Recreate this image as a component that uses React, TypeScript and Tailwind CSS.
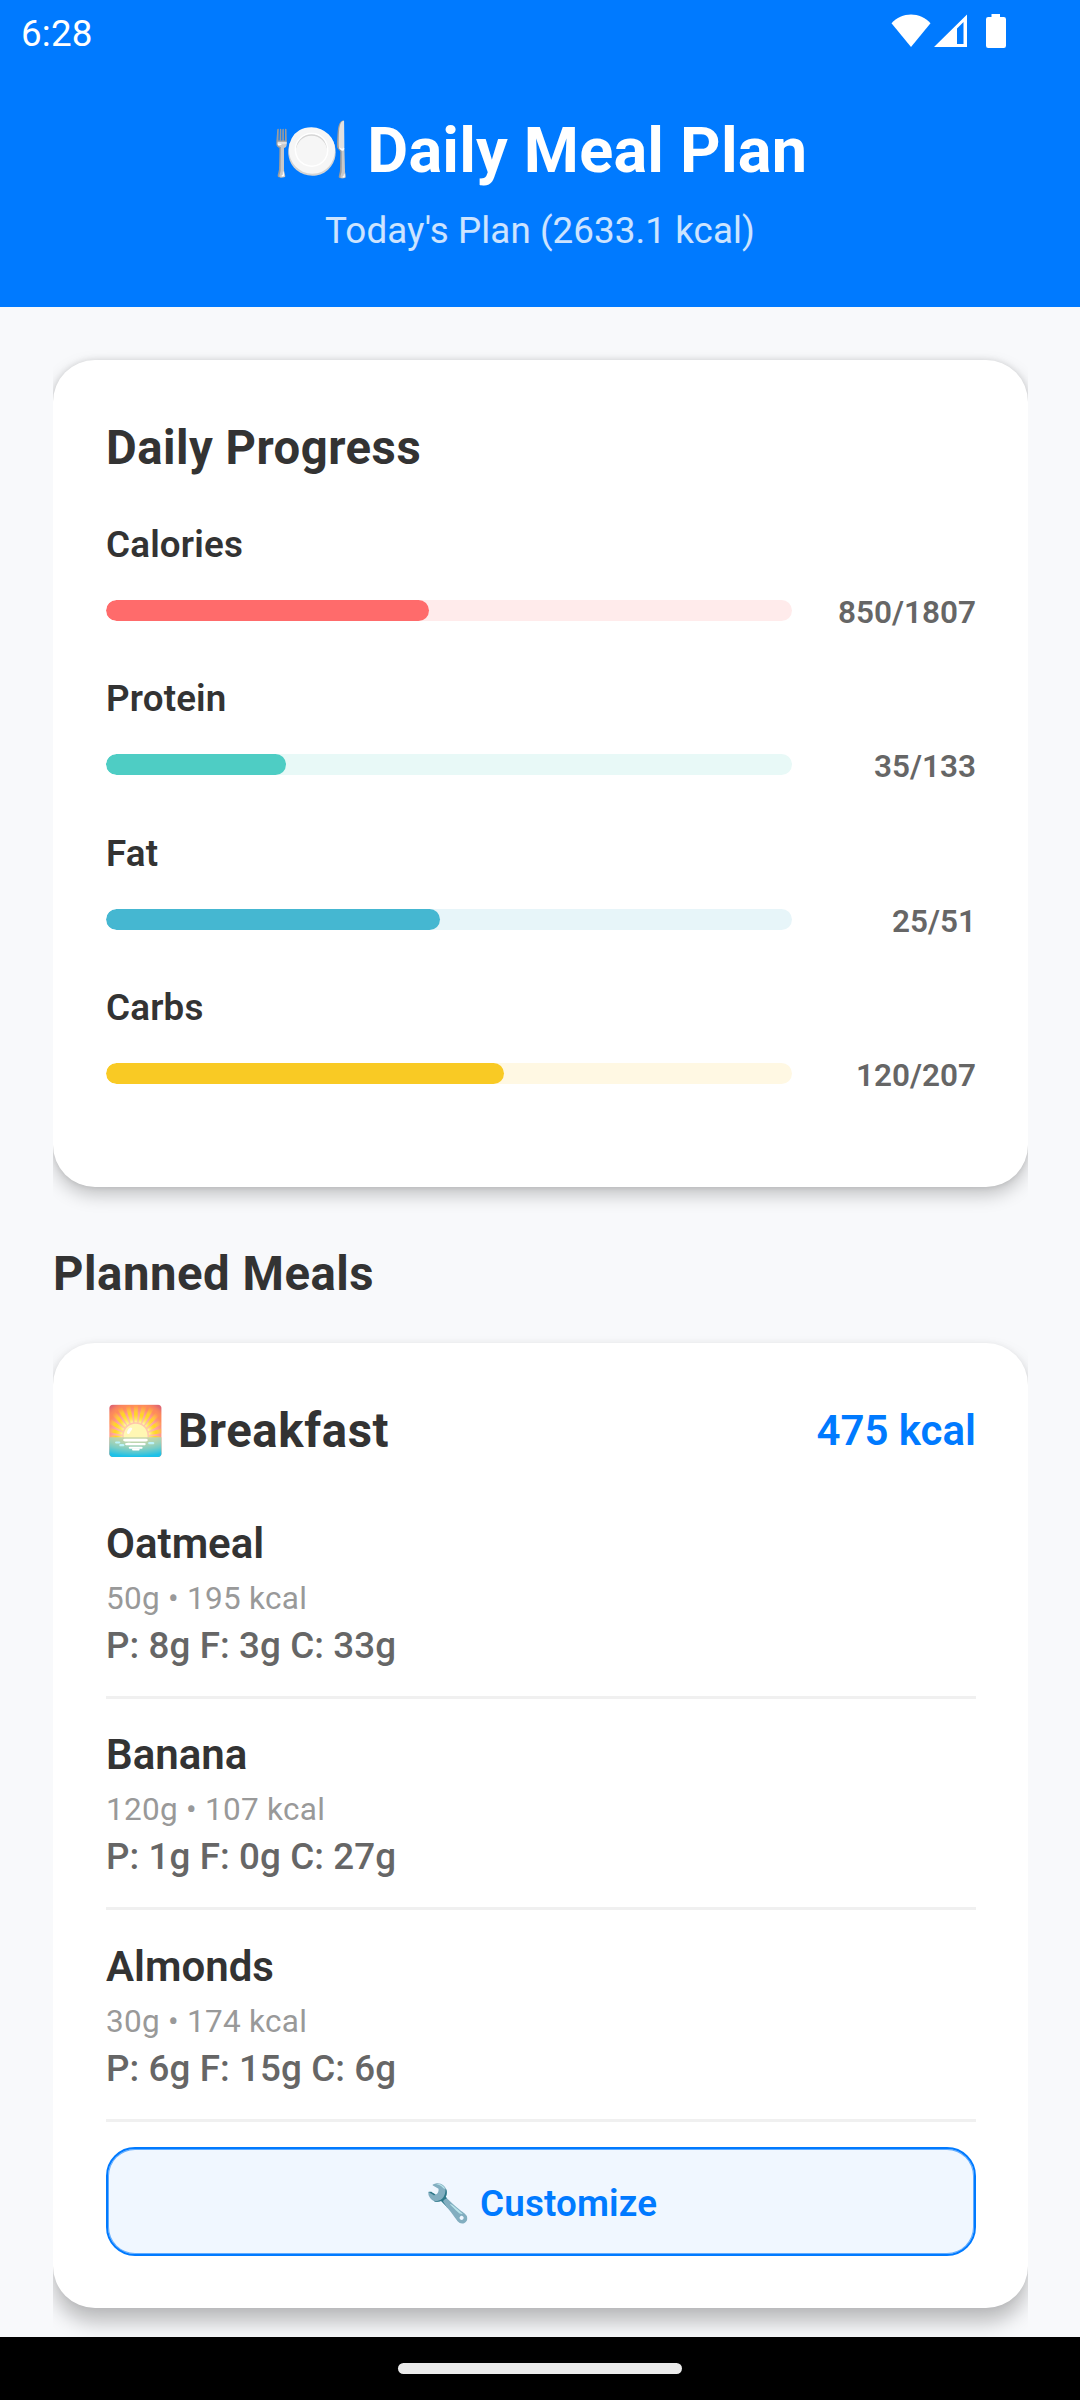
const nutrients = [
  { name: 'Calories', value: 850, goal: 1807, fill: 'bg-[#ff6b6b]', track: 'bg-[#ffebeb]' },
  { name: 'Protein', value: 35, goal: 133.4, fill: 'bg-[#4ecdc4]', track: 'bg-[#e8f9f7]' },
  { name: 'Fat', value: 25, goal: 51.35, fill: 'bg-[#45b7d1]', track: 'bg-[#e7f5f9]' },
  { name: 'Carbs', value: 120, goal: 207, fill: 'bg-[#f9ca24]', track: 'bg-[#fff8e3]' },
];

const foods = [
  { name: 'Oatmeal', detail: '50g • 195 kcal', macros: 'P: 8g F: 3g C: 33g' },
  { name: 'Banana', detail: '120g • 107 kcal', macros: 'P: 1g F: 0g C: 27g' },
  { name: 'Almonds', detail: '30g • 174 kcal', macros: 'P: 6g F: 15g C: 6g' },
];

function StatusBar() {
  return (
    <div className="flex h-[67px] items-start justify-between pl-[21px] pr-[74px] text-white">
      <span className="text-[36.75px] leading-[67px] tracking-[0.2px]">6:28</span>
      <svg width="116" height="36" viewBox="0 0 116 36" className="mt-[13px]" fill="#fff">
        <path d="M1.500 10.200C11.500 -1.500 30.500 -1.500 40.500 10.200L21 34Z" />
        <path fillRule="evenodd" d="M44 34L77 1.500V34ZM67 31H73.500V9L67 15.500Z" />
        <path d="M101.500 1h8.500v3h3.800a2.200 2.200 0 0 1 2.200 2.200v26.600a2.200 2.200 0 0 1-2.200 2.200h-15.600a2.200 2.200 0 0 1-2.200-2.200V6.200A2.200 2.200 0 0 1 98.200 4h3.300z" />
      </svg>
    </div>
  );
}

export default function App() {
  return (
    <div className="flex h-[2400px] w-[1080px] flex-col overflow-hidden bg-[#f8f9fb] font-['Roboto','Noto_Color_Emoji',sans-serif] text-[#333]">
      <header className="h-[307px] shrink-0 bg-[#007aff] text-center text-white">
        <StatusBar />
        <h1 className="mt-[46px] h-[75px] whitespace-nowrap text-[63px] font-bold leading-[75px] tracking-[0.2px]">🍽️ Daily Meal Plan</h1>
        <p className="mt-[21px] text-[36.75px] leading-[43px] tracking-[0.08px] text-white/80">Today's Plan (2633.1 kcal)</p>
      </header>

      <main className="mx-[53px] h-[2030px] w-[975px] shrink-0 overflow-clip pt-[53px]">
        <section className="h-[827px] rounded-[42px] bg-white pl-[53px] pr-[52px] pt-[60px] shadow-[0_8px_18px_rgba(0,0,0,0.22),0_0_6px_rgba(0,0,0,0.12)]">
          <h2 className="text-[47.25px] font-bold leading-[56px] tracking-[0.5px]">Daily Progress</h2>
          <div className="mt-[47px] flex flex-col gap-[45.33px]">
            {nutrients.map((n) => (
              <div key={n.name}>
                <div className="text-[36.75px] font-semibold leading-[44px] tracking-[0.18px]">{n.name}</div>
                <div className="mt-[27px] flex h-[38px] items-start justify-between">
                  <div className={`mt-[6px] h-[21px] w-[686px] overflow-hidden rounded-full ${n.track}`}>
                    <div className={`h-full rounded-full ${n.fill}`} style={{ width: `${(n.value / n.goal) * 100}%` }} />
                  </div>
                  <span className="text-[31.5px] font-semibold leading-[38px] text-[#666]">
                    {n.value}/{Math.round(n.goal)}
                  </span>
                </div>
              </div>
            ))}
          </div>
        </section>

        <h2 className="mt-[59px] text-[47.25px] font-bold leading-[56px] tracking-[0.55px]">Planned Meals</h2>

        <section className="mt-[41px] h-[965px] rounded-[42px] bg-white pl-[53px] pr-[52px] pt-[60px] shadow-[0_14px_20px_rgba(0,0,0,0.25),0_0_6px_rgba(0,0,0,0.06)]">
          <div className="flex h-[56px] items-center justify-between">
            <h3 className="text-[47.25px] font-bold leading-[56px] tracking-[0.65px]">🌅 Breakfast</h3>
            <span className="text-[42px] font-semibold leading-[56px] text-[#007aff]">475 kcal</span>
          </div>
          <ul className="mt-[60px]">
            {foods.map((f) => (
              <li key={f.name} className="mb-[31.45px] h-[180px] border-b-[3px] border-[#f0f0f0]">
                <div className="text-[42px] font-semibold leading-[50px]">{f.name}</div>
                <div className="mt-[10.7px] text-[31.5px] leading-[38px] tracking-[0.28px] text-[#999]">{f.detail}</div>
                <div className="mt-[6px] text-[36.75px] font-medium leading-[44px] tracking-[0.1px] text-[#666]">{f.macros}</div>
              </li>
            ))}
          </ul>
          <button className="-mt-[6.35px] flex h-[109px] w-full items-center justify-center rounded-[29px] border-2 border-[#007aff] bg-[#f0f7ff] pt-[5px] text-[36.75px] font-semibold leading-[44px] tracking-[0.15px] text-[#007aff] shadow-[inset_0_0_0_1px_rgba(0,122,255,0.6)]">
            🔧 Customize
          </button>
        </section>
      </main>

      <footer className="flex h-[63px] shrink-0 justify-center bg-black pt-[26px]">
        <div className="h-[11px] w-[284px] rounded-full bg-[#ebebeb]" />
      </footer>
    </div>
  );
}
